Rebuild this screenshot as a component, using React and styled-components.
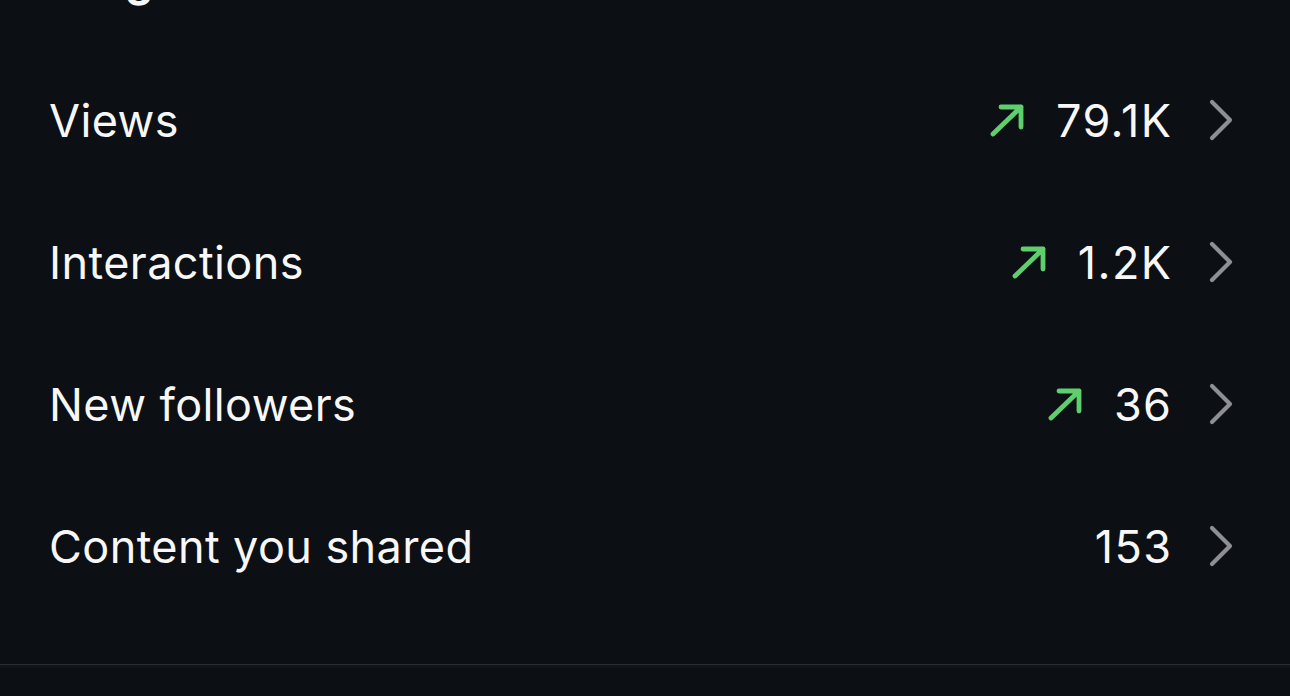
import React from "react";
import styled, { createGlobalStyle } from "styled-components";

const stats = [
  { label: "Views", value: "79.1K", up: true },
  { label: "Interactions", value: "1.2K", up: true },
  { label: "New followers", value: "36", up: true },
  { label: "Content you shared", value: "153", up: false },
];

export default function App() {
  return (
    <>
      <Global />
      <Page>
        <Section>
          <Title>Insights</Title>
          <List>
            {stats.map((s) => (
              <Row key={s.label}>
                <Label>{s.label}</Label>
                <Right>
                  {s.up && <TrendUp />}
                  <Value>{s.value}</Value>
                  <Chevron />
                </Right>
              </Row>
            ))}
          </List>
        </Section>
        <Divider />
      </Page>
    </>
  );
}

function TrendUp() {
  return (
    <ArrowSvg width="36" height="34" viewBox="0 0 36 34" fill="none">
      <path
        d="M4 31 L32 4 M12 4 H32 V24"
        stroke="#5fcf6e"
        strokeWidth="4.8"
        strokeLinecap="round"
        strokeLinejoin="round"
      />
    </ArrowSvg>
  );
}

function Chevron() {
  return (
    <ChevronSvg width="24" height="42" viewBox="0 0 24 42" fill="none">
      <path
        d="M3 3 L21 21 L3 39"
        stroke="#8e8f94"
        strokeWidth="4.2"
        strokeLinecap="round"
        strokeLinejoin="round"
      />
    </ChevronSvg>
  );
}

const Global = createGlobalStyle`
  html, body {
    margin: 0;
    padding: 0;
    background: #0c0f14;
  }
  body {
    font-family: Inter, "Liberation Sans", sans-serif;
    color: #f7f7f8;
    overflow: hidden;
  }
`;

const Page = styled.div`
  width: 1290px;
  height: 696px;
  background: #0c0f14;
  overflow: hidden;
`;

const Section = styled.div`
  padding: 0 57px 47px 49px;
`;

const Title = styled.h2`
  margin: -46px 0 0;
  height: 52px;
  font-size: 44px;
  line-height: 52px;
  font-weight: 700;
`;

const List = styled.div`
  margin-top: 43px;
  display: flex;
  flex-direction: column;
`;

const Row = styled.div`
  height: 142px;
  display: flex;
  align-items: center;
`;

const Label = styled.div`
  flex: 1;
  font-size: 45px;
  font-weight: 400;
  letter-spacing: 0.4px;
`;

const Right = styled.div`
  display: flex;
  align-items: center;
`;

const Value = styled.div`
  font-size: 45px;
  font-weight: 400;
  letter-spacing: 1.4px;
  margin-right: -1.4px;
`;

const ArrowSvg = styled.svg`
  display: block;
  margin-right: 31px;
`;

const ChevronSvg = styled.svg`
  display: block;
  margin-left: 38px;
`;

const Divider = styled.div`
  height: 1px;
  background: #2b2d31;
  border-bottom: 3px solid #111419;
`;
